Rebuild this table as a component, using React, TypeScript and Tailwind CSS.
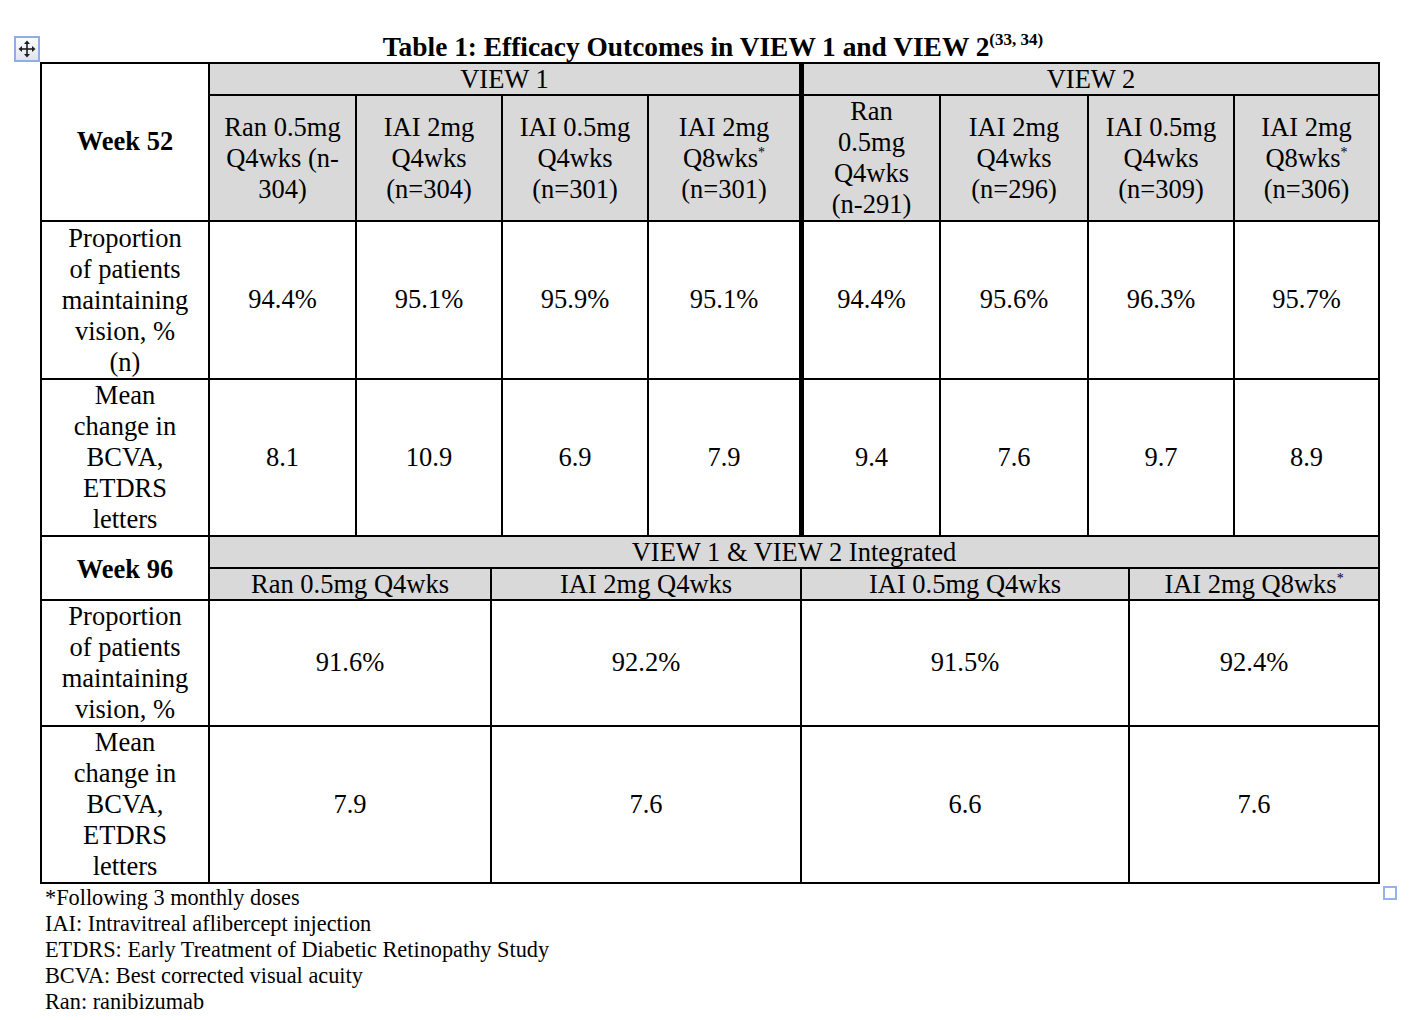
import React from "react";

const serif = "font-['Liberation_Serif','Times_New_Roman',serif]";
const cell = "flex items-center justify-center text-center bg-white";
const head = "flex items-center justify-center text-center bg-[#d9d9d9]";
const thick = "border-l-[3px] border-black";

function Star() {
  return <sup className="relative -top-[10px] text-[14px]">*</sup>;
}

function Lines({ lines }: { lines: React.ReactNode[] }) {
  return (
    <div className="leading-[31px]">
      {lines.map((l, i) => (
        <div key={i}>{l}</div>
      ))}
    </div>
  );
}

const view52Heads: React.ReactNode[][] = [
  ["Ran 0.5mg", "Q4wks (n-", "304)"],
  ["IAI 2mg", "Q4wks", "(n=304)"],
  ["IAI 0.5mg", "Q4wks", "(n=301)"],
  [
    "IAI 2mg",
    <>
      Q8wks
      <Star />
    </>,
    "(n=301)",
  ],
  ["Ran", "0.5mg", "Q4wks", "(n-291)"],
  ["IAI 2mg", "Q4wks", "(n=296)"],
  ["IAI 0.5mg", "Q4wks", "(n=309)"],
  [
    "IAI 2mg",
    <>
      Q8wks
      <Star />
    </>,
    "(n=306)",
  ],
];

const prop52 = ["94.4%", "95.1%", "95.9%", "95.1%", "94.4%", "95.6%", "96.3%", "95.7%"];
const mean52 = ["8.1", "10.9", "6.9", "7.9", "9.4", "7.6", "9.7", "8.9"];

const heads96: React.ReactNode[] = [
  "Ran 0.5mg Q4wks",
  "IAI 2mg Q4wks",
  "IAI 0.5mg Q4wks",
  <>
    IAI 2mg Q8wks
    <Star />
  </>,
];
const prop96 = ["91.6%", "92.2%", "91.5%", "92.4%"];
const mean96 = ["7.9", "7.6", "6.6", "7.6"];

function MoveHandle() {
  return (
    <div className="absolute left-[14px] top-[36px] flex h-[26px] w-[26px] items-center justify-center border-2 border-[#8eaee6] bg-gradient-to-b from-[#fbfcfe] to-[#dfe5ef]">
      <svg width="18" height="18" viewBox="0 0 18 18" fill="#1f1f1f">
        <rect x="8.2" y="3" width="1.6" height="12" />
        <rect x="3" y="8.2" width="12" height="1.6" />
        <path d="M9 0.5 L12 4 L6 4 Z" />
        <path d="M9 17.5 L12 14 L6 14 Z" />
        <path d="M0.5 9 L4 6 L4 12 Z" />
        <path d="M17.5 9 L14 6 L14 12 Z" />
      </svg>
    </div>
  );
}

export default function App() {
  return (
    <div className={`relative min-h-[1020px] w-[1414px] bg-white text-black ${serif}`}>
      <MoveHandle />
      <div className="absolute left-[1383px] top-[886px] h-[14px] w-[14px] border-2 border-[#93b3ea] bg-white" />

      <div className="pl-[40px] pt-[32px]">
        <div className="w-[1340px] pl-[6px] text-center text-[27.4px] font-bold leading-[30px]">
          Table 1: Efficacy Outcomes in VIEW 1 and VIEW 2
          <sup className="relative -top-[11px] text-[17px]">(33, 34)</sup>
        </div>

        {/* Week 52 */}
        <div className="grid w-[1340px] grid-cols-[166px_145px_144px_144px_150px_138px_146px_144px_143px] grid-rows-[30px_124px_156px_155px] gap-[2px] bg-black p-[2px] text-[26.5px]">
          <div className={`${cell} row-span-2 font-bold`}>Week 52</div>
          <div className={`${head} col-span-4 leading-[30px]`}>VIEW 1</div>
          <div className={`${head} ${thick} col-span-4 leading-[30px]`}>VIEW 2</div>
          {view52Heads.map((h, i) => (
            <div key={i} className={`${head} ${i === 4 ? thick : ""}`}>
              <Lines lines={h} />
            </div>
          ))}

          <div className={cell}>
            <Lines lines={["Proportion", "of patients", "maintaining", "vision, %", "(n)"]} />
          </div>
          {prop52.map((v, i) => (
            <div key={i} className={`${cell} ${i === 4 ? thick : ""}`}>
              {v}
            </div>
          ))}

          <div className={cell}>
            <Lines lines={["Mean", "change in", "BCVA,", "ETDRS", "letters"]} />
          </div>
          {mean52.map((v, i) => (
            <div key={i} className={`${cell} ${i === 4 ? thick : ""}`}>
              {v}
            </div>
          ))}
        </div>

        {/* Week 96 */}
        <div className="grid w-[1340px] grid-cols-[166px_280px_308px_326px_248px] grid-rows-[30px_30px_124px_155px] gap-[2px] bg-black px-[2px] pb-[2px] text-[26.5px]">
          <div className={`${cell} row-span-2 pt-[3px] font-bold`}>Week 96</div>
          <div className={`${head} col-span-4 leading-[30px]`}>VIEW 1 &amp; VIEW 2 Integrated</div>
          {heads96.map((h, i) => (
            <div key={i} className={`${head} leading-[30px]`}>
              <span>{h}</span>
            </div>
          ))}

          <div className={cell}>
            <Lines lines={["Proportion", "of patients", "maintaining", "vision, %"]} />
          </div>
          {prop96.map((v, i) => (
            <div key={i} className={cell}>
              {v}
            </div>
          ))}

          <div className={cell}>
            <Lines lines={["Mean", "change in", "BCVA,", "ETDRS", "letters"]} />
          </div>
          {mean96.map((v, i) => (
            <div key={i} className={cell}>
              {v}
            </div>
          ))}
        </div>

        <div className="pl-[5px] pt-[1px] text-[22.3px] leading-[26px]">
          <div>*Following 3 monthly doses</div>
          <div>IAI: Intravitreal aflibercept injection</div>
          <div>ETDRS: Early Treatment of Diabetic Retinopathy Study</div>
          <div>BCVA: Best corrected visual acuity</div>
          <div>Ran: ranibizumab</div>
        </div>
      </div>
    </div>
  );
}
